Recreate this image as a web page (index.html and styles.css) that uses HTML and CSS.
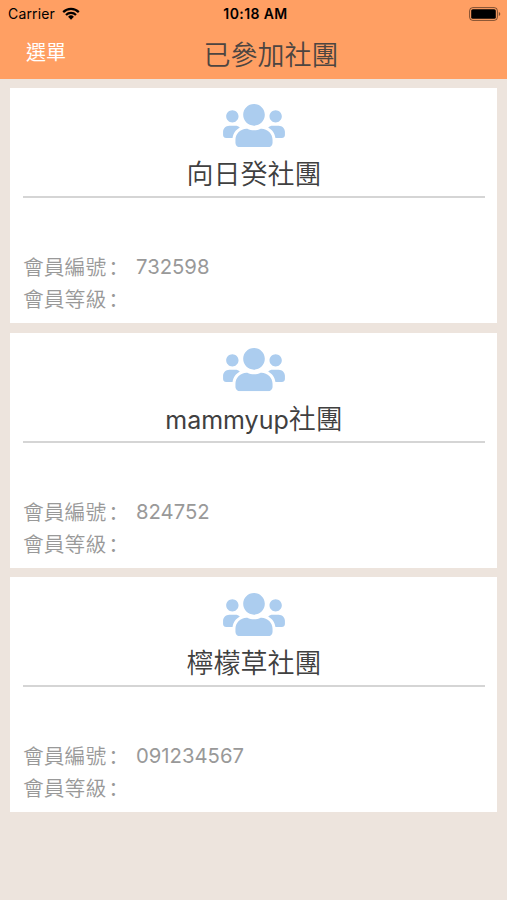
FILE: index.html
```html
<!DOCTYPE html>
<html lang="zh-Hant">
<head>
<meta charset="utf-8">
<title>已參加社團</title>
<link rel="stylesheet" href="styles.css">
</head>
<body>
<svg class="defs" width="0" height="0" aria-hidden="true">
  <symbol id="users" viewBox="0 32 640 448"><path d="M96 224c35.3 0 64-28.7 64-64s-28.7-64-64-64-64 28.7-64 64 28.7 64 64 64zm448 0c35.3 0 64-28.7 64-64s-28.7-64-64-64-64 28.7-64 64 28.7 64 64 64zm32 32h-64c-17.6 0-33.5 7.1-45.1 18.6 40.3 22.1 68.9 62 75.1 109.4h66c17.7 0 32-14.3 32-32v-32c0-35.3-28.7-64-64-64zm-256 0c61.9 0 112-50.1 112-112S381.9 32 320 32 208 82.1 208 144s50.1 112 112 112zm76.8 32h-8.3c-20.8 10-43.9 16-68.5 16s-47.6-6-68.5-16h-8.3C179.6 288 128 339.6 128 403.2V432c0 26.5 21.5 48 48 48h288c26.5 0 48-21.5 48-48v-28.8c0-63.6-51.6-115.2-115.2-115.2zm-223.7-13.4C161.5 263.1 145.6 256 128 256H64c-35.3 0-64 28.7-64 64v32c0 17.7 14.3 32 32 32h65.9c6.3-47.4 34.9-87.3 75.2-109.4z"/></symbol>
</svg>
<header class="top">
  <div class="status">
    <div class="carrier">
      <span>Carrier</span>
      <svg class="wifi" viewBox="0 0 18 13"><g fill="none" stroke="#000" stroke-width="2.2"><path d="M1.2 5.1a11 11 0 0 1 15.6 0"/><path d="M4 8a7 7 0 0 1 10 0"/></g><path d="M9 12.7 6.1 9.8a4.1 4.1 0 0 1 5.8 0z"/></svg>
    </div>
    <div class="clock">10:18 AM</div>
    <svg class="battery" viewBox="0 0 32 14"><rect x=".6" y=".6" width="27.8" height="12.8" rx="3.2" fill="none" stroke="#000" stroke-opacity=".5"/><rect x="2.2" y="2.2" width="24.6" height="9.6" rx="1.6"/><path d="M29.8 5v4q1.5-.5 1.5-2t-1.5-2z" opacity=".5"/></svg>
  </div>
  <nav class="nav">
    <span class="menu">選單</span>
    <h1 class="title">已參加社團</h1>
  </nav>
</header>
<main class="list">
  <section class="card">
    <svg class="users"><use href="#users"/></svg>
    <h2 class="name">向日癸社團</h2>
    <dl class="info">
      <dt>會員編號<span class="colon" lang="zh-Hans">：</span></dt><dd>732598</dd>
      <dt>會員等級<span class="colon" lang="zh-Hans">：</span></dt><dd></dd>
    </dl>
  </section>
  <section class="card">
    <svg class="users"><use href="#users"/></svg>
    <h2 class="name"><span class="latin">mammyup</span>社團</h2>
    <dl class="info">
      <dt>會員編號<span class="colon" lang="zh-Hans">：</span></dt><dd>824752</dd>
      <dt>會員等級<span class="colon" lang="zh-Hans">：</span></dt><dd></dd>
    </dl>
  </section>
  <section class="card">
    <svg class="users"><use href="#users"/></svg>
    <h2 class="name">檸檬草社團</h2>
    <dl class="info">
      <dt>會員編號<span class="colon" lang="zh-Hans">：</span></dt><dd>091234567</dd>
      <dt>會員等級<span class="colon" lang="zh-Hans">：</span></dt><dd></dd>
    </dl>
  </section>
</main>
</body>
</html>
```
FILE: styles.css
```css
* { box-sizing: border-box; margin: 0; padding: 0; }
body {
  min-height: 900px;
  background: #ede4dd;
  font-family: Inter, "Noto Sans CJK TC", sans-serif;
  color: #404040;
}
.defs { position: absolute; }
.top { height: 79px; background: #ff9f63; }
.status {
  height: 27px;
  padding: 0 6px 0 8px;
  display: grid;
  grid-template-columns: 1fr auto 1fr;
  align-items: center;
  color: #000;
}
.carrier { display: flex; align-items: center; gap: 7px; font-size: 14px; letter-spacing: 0.15px; }
.wifi { width: 18px; height: 13px; }
.clock { padding-left: 2px; font-size: 14px; font-weight: 600; letter-spacing: 0.4px; }
.battery { width: 32px; height: 14px; justify-self: end; }
.nav {
  height: 52px;
  display: grid;
  grid-template-columns: 1fr auto 1fr;
  align-items: start;
}
.menu { padding-left: 26px; font-size: 20px; line-height: 52px; color: #fff; }
.title {
  grid-column: 2;
  padding: 3px 0 0 35px;
  font-size: 27px;
  line-height: 52px;
  font-weight: 350;
  color: #4d4541;
}
.list { padding: 9.3px 10px 0; display: flex; flex-direction: column; gap: 9.4px; }
.card {
  height: 235px;
  padding: 15.7px 12px 0 13px;
  display: flex;
  flex-direction: column;
  background: #fff;
}
.users { width: 62px; height: 43.3px; align-self: center; fill: #accdef; }
.name {
  height: 51px;
  border-bottom: 2px solid #d5d5d5;
  font-size: 27px;
  line-height: 55px;
  font-weight: 350;
  text-align: center;
  white-space: nowrap;
}
.latin { font-size: 25px; font-weight: 400; }
.info {
  margin-top: 53px;
  display: grid;
  grid-template-columns: 113px 1fr;
  grid-auto-rows: 32px;
  font-size: 20.8px;
  line-height: 31px;
  color: #999;
  font-weight: 350;
}
.info dd { font-size: 20.3px; font-weight: 400; }
.colon { padding-left: 2px; font-family: "Noto Sans CJK SC", sans-serif; }
```
